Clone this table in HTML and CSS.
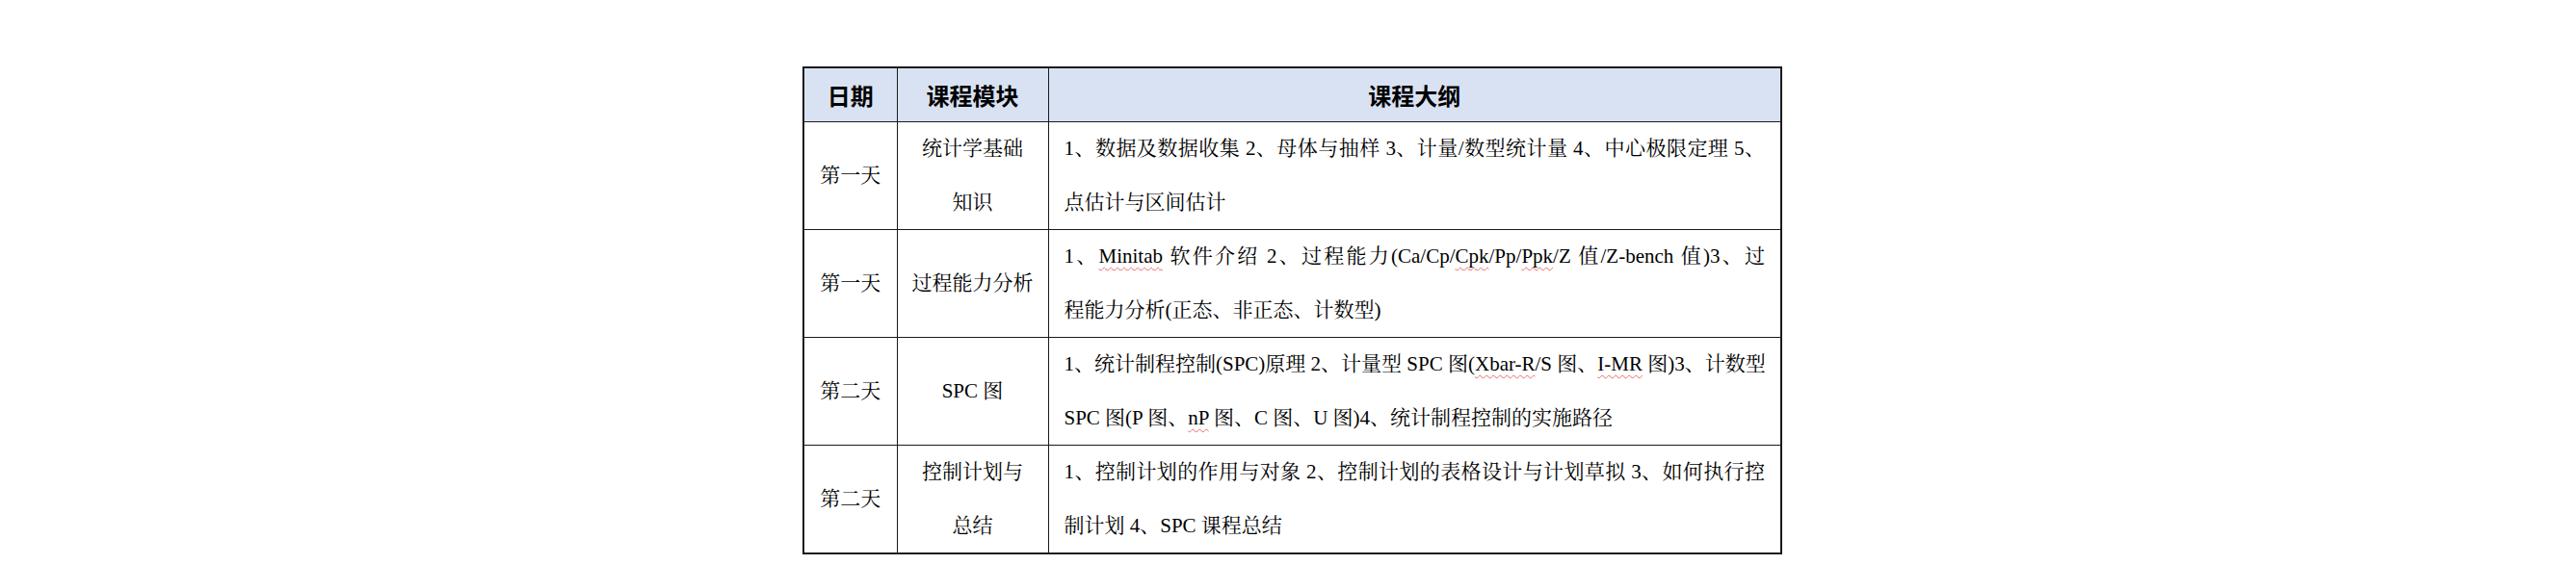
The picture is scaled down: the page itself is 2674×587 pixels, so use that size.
FILE: index.html
```html
<!DOCTYPE html>
<html lang="zh-CN">
<head>
<meta charset="utf-8">
<title>课程大纲</title>
<link rel="stylesheet" href="styles.css">
</head>
<body>
<div class="page">
  <table class="syllabus">
    <colgroup>
      <col class="c-date">
      <col class="c-module">
      <col class="c-outline">
    </colgroup>
    <thead>
      <tr>
        <th>日期</th>
        <th>课程模块</th>
        <th>课程大纲</th>
      </tr>
    </thead>
    <tbody>
      <tr>
        <td class="center">第一天</td>
        <td class="center">统计学基础<br>知识</td>
        <td class="outline">
          <span class="ln full">1、数据及数据收集 2、母体与抽样 3、计量/数型统计量 4、中心极限定理 5、</span>
          <span class="ln">点估计与区间估计</span>
        </td>
      </tr>
      <tr>
        <td class="center">第一天</td>
        <td class="center">过程能力分析</td>
        <td class="outline">
          <span class="ln full">1、<span class="spell">Minitab</span> 软件介绍 2、过程能力(Ca/Cp/<span class="spell">Cpk</span>/Pp/<span class="spell">Ppk</span>/Z 值/Z-bench 值)3、过</span>
          <span class="ln">程能力分析(正态、非正态、计数型)</span>
        </td>
      </tr>
      <tr>
        <td class="center">第二天</td>
        <td class="center">SPC 图</td>
        <td class="outline">
          <span class="ln full">1、统计制程控制(SPC)原理 2、计量型 SPC 图(<span class="spell">Xbar-R</span>/S 图、<span class="spell">I-MR</span> 图)3、计数型</span>
          <span class="ln">SPC 图(P 图、<span class="spell">nP</span> 图、C 图、U 图)4、统计制程控制的实施路径</span>
        </td>
      </tr>
      <tr>
        <td class="center">第二天</td>
        <td class="center">控制计划与<br>总结</td>
        <td class="outline">
          <span class="ln full">1、控制计划的作用与对象 2、控制计划的表格设计与计划草拟 3、如何执行控</span>
          <span class="ln">制计划 4、SPC 课程总结</span>
        </td>
      </tr>
    </tbody>
  </table>
</div>
</body>
</html>
```

FILE: styles.css
```css
html, body {
  margin: 0;
  background: #ffffff;
}

.page {
  padding: 69px 0 0 833px;
}

.syllabus {
  border-collapse: collapse;
  table-layout: fixed;
  width: 1015px;
  border: 2px solid #1a1a1a;
  font-family: "Liberation Serif", "Noto Serif CJK SC", "Noto Sans CJK SC", serif;
  font-size: 21px;
  color: #000000;
}

.c-date { width: 97px; }
.c-module { width: 157px; }
.c-outline { width: 761px; }

.syllabus th {
  height: 55px;
  padding: 0;
  background: #d9e2f3;
  border: 1px solid #1a1a1a;
  font-family: "Noto Sans CJK SC", sans-serif;
  font-weight: 700;
  font-size: 24px;
  text-align: center;
  vertical-align: middle;
}

.syllabus td {
  padding: 0 16px;
  border: 1px solid #1a1a1a;
  line-height: 55.5px;
  vertical-align: middle;
}

.syllabus td.center {
  padding: 0 4px;
  text-align: center;
}

.outline {
  text-align: left;
}

.ln {
  display: block;
  white-space: nowrap;
}

.ln.full {
  text-align: justify;
  text-align-last: justify;
}

.spell {
  text-decoration: underline wavy #e86a6a;
  text-decoration-thickness: 1px;
  text-underline-offset: 4px;
}
```
